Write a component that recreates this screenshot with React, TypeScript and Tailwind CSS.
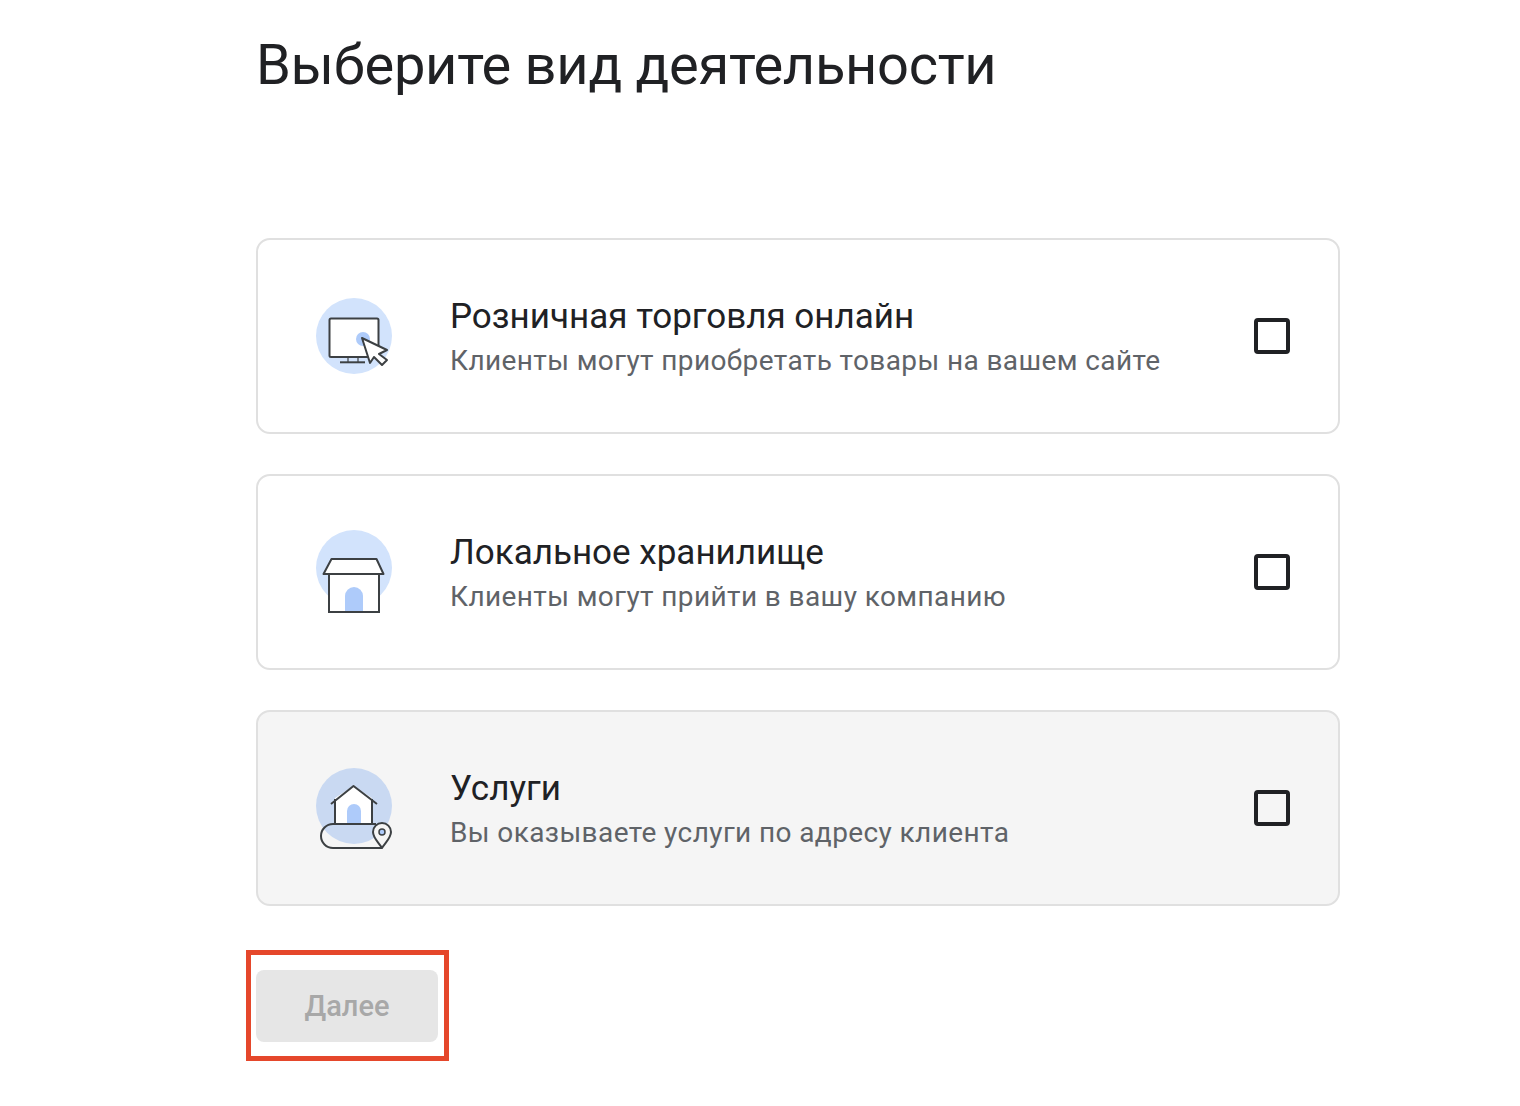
const ink = "#3c4043";

function RetailIcon() {
  return (
    <svg width="80" height="84" viewBox="0 -2 80 84" fill="none">
      <circle cx="40" cy="40" r="38" fill="#d2e3fc" />
      <rect x="15.5" y="22.5" width="49" height="38.5" rx="1.5" fill="#fff" stroke={ink} strokeWidth="2" />
      <path d="M34 61v5M44 61v5" stroke={ink} strokeWidth="1.2" />
      <path d="M26 66.3h25" stroke={ink} strokeWidth="2" />
      <circle cx="49" cy="43" r="7" fill="#aecbfa" />
      <path d="M48 42l25 12-8 4 8 6-5 5-8-8-4 6z" fill="#fff" stroke={ink} strokeWidth="2" strokeLinejoin="round" />
    </svg>
  );
}

function StoreIcon() {
  return (
    <svg width="80" height="84" viewBox="0 -2 80 84" fill="none">
      <circle cx="40" cy="36" r="38" fill="#d2e3fc" />
      <path d="M15 42h50v38H15z" fill="#fff" stroke={ink} strokeWidth="2" />
      <path d="M31 79V64a9 9 0 0 1 18 0v15z" fill="#aecbfa" />
      <path d="M15 80h50" stroke={ink} strokeWidth="2" />
      <path d="M17.5 27h45l7 15h-60z" fill="#fff" stroke={ink} strokeWidth="2" strokeLinejoin="round" />
    </svg>
  );
}

function ServiceIcon() {
  return (
    <svg width="80" height="84" viewBox="0 -2 80 84" fill="none">
      <circle cx="40" cy="38" r="38" fill="#c9d9f2" />
      <path d="M21 56V30L39.5 18 58 30v26z" fill="#fff" />
      <path d="M33 56V43a7 7 0 0 1 14 0v13z" fill="#aecbfa" />
      <path d="M21 31v25M58 31v25M17 36L39.5 18 63 36" stroke={ink} strokeWidth="2" strokeLinejoin="round" />
      <path d="M62 56H19a12 12 0 0 0 0 24h49" stroke={ink} strokeWidth="2" />
      <path d="M68 80c-3-5-9-10-9-16a9 9 0 0 1 18 0c0 6-6 11-9 16z" fill="#f5f5f5" stroke={ink} strokeWidth="2" strokeLinejoin="round" />
      <circle cx="68" cy="64" r="3" fill="#aecbfa" stroke={ink} strokeWidth="1.5" />
    </svg>
  );
}

const cards = [
  {
    title: "Розничная торговля онлайн",
    sub: "Клиенты могут приобретать товары на вашем сайте",
    icon: <RetailIcon />,
    bg: "bg-white",
  },
  {
    title: "Локальное хранилище",
    sub: "Клиенты могут прийти в вашу компанию",
    icon: <StoreIcon />,
    bg: "bg-white",
  },
  {
    title: "Услуги",
    sub: "Вы оказываете услуги по адресу клиента",
    icon: <ServiceIcon />,
    bg: "bg-[#f5f5f5]",
  },
];

export default function App() {
  return (
    <div className="min-h-[1106px] bg-white pl-[256px] pt-[30px] font-['Roboto',sans-serif]">
      <h1 className="m-0 h-[72px] text-[56px] font-normal leading-[70px] tracking-[-0.28px] text-[#202124]">
        Выберите вид деятельности
      </h1>

      <div className="mt-[136px] flex w-[1084px] flex-col gap-[40px]">
        {cards.map((card) => (
          <div
            key={card.title}
            className={`flex h-[196px] items-center rounded-[14px] border-2 border-[#e0e0e0] pl-[56px] pr-[48px] ${card.bg}`}
          >
            <div className="mr-[56px] flex h-[84px] w-[80px] shrink-0 items-center">{card.icon}</div>
            <div className="flex-1 pt-[4px]">
              <div className="text-[35px] leading-[44px] text-[#202124]">{card.title}</div>
              <div className="mt-[2px] text-[28px] leading-[40px] tracking-[0.4px] text-[#5f6368]">{card.sub}</div>
            </div>
            <div className="h-[36px] w-[36px] rounded-[4px] border-[4px] border-[#202124]" />
          </div>
        ))}
      </div>

      <div className="ml-[-10px] mt-[44px] h-[111px] w-[203px] border-[5px] border-[#e5472b] pl-[5px] pt-[15px]">
        <div className="flex h-[72px] w-[182px] items-center justify-center rounded-[8px] bg-[#e6e6e6] pt-[2px] text-[29px] font-medium text-[#a8a8a8]">
          Далее
        </div>
      </div>
    </div>
  );
}
